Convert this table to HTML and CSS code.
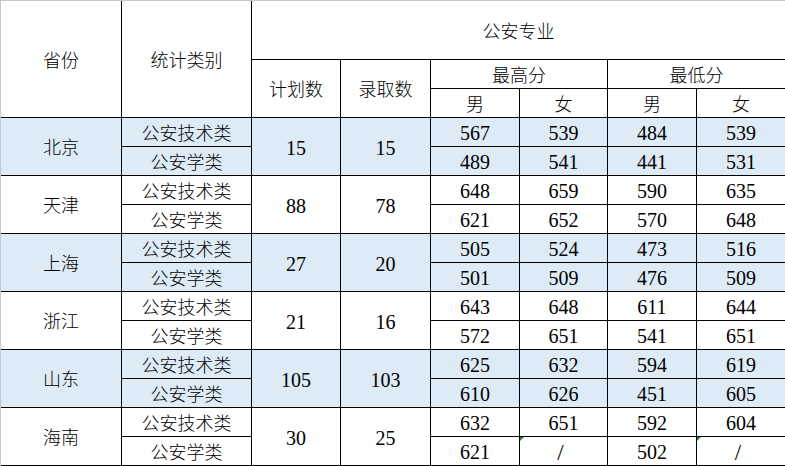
FILE: index.html
```html
<!DOCTYPE html>
<html lang="zh-CN">
<head>
<meta charset="utf-8">
<title>公安专业录取分数</title>
<link rel="stylesheet" href="styles.css">
</head>
<body>
<div class="sheet">
  <div class="c r3">省份</div>
  <div class="c r3">统计类别</div>
  <div class="c s6 top">公安专业</div>
  <div class="c r2">计划数</div>
  <div class="c r2">录取数</div>
  <div class="c s2">最高分</div>
  <div class="c s2">最低分</div>
  <div class="c">男</div>
  <div class="c">女</div>
  <div class="c">男</div>
  <div class="c">女</div>

  <div class="c r2 b">北京</div>
  <div class="c b">公安技术类</div>
  <div class="c r2 b n">15</div>
  <div class="c r2 b n">15</div>
  <div class="c b n">567</div>
  <div class="c b n">539</div>
  <div class="c b n">484</div>
  <div class="c b n">539</div>
  <div class="c b">公安学类</div>
  <div class="c b n">489</div>
  <div class="c b n">541</div>
  <div class="c b n">441</div>
  <div class="c b n">531</div>

  <div class="c r2">天津</div>
  <div class="c">公安技术类</div>
  <div class="c r2 n">88</div>
  <div class="c r2 n">78</div>
  <div class="c n">648</div>
  <div class="c n">659</div>
  <div class="c n">590</div>
  <div class="c n">635</div>
  <div class="c">公安学类</div>
  <div class="c n">621</div>
  <div class="c n">652</div>
  <div class="c n">570</div>
  <div class="c n">648</div>

  <div class="c r2 b">上海</div>
  <div class="c b">公安技术类</div>
  <div class="c r2 b n">27</div>
  <div class="c r2 b n">20</div>
  <div class="c b n">505</div>
  <div class="c b n">524</div>
  <div class="c b n">473</div>
  <div class="c b n">516</div>
  <div class="c b">公安学类</div>
  <div class="c b n">501</div>
  <div class="c b n">509</div>
  <div class="c b n">476</div>
  <div class="c b n">509</div>

  <div class="c r2">浙江</div>
  <div class="c">公安技术类</div>
  <div class="c r2 n">21</div>
  <div class="c r2 n">16</div>
  <div class="c n">643</div>
  <div class="c n">648</div>
  <div class="c n">611</div>
  <div class="c n">644</div>
  <div class="c">公安学类</div>
  <div class="c n">572</div>
  <div class="c n">651</div>
  <div class="c n">541</div>
  <div class="c n">651</div>

  <div class="c r2 b">山东</div>
  <div class="c b">公安技术类</div>
  <div class="c r2 b n">105</div>
  <div class="c r2 b n">103</div>
  <div class="c b n">625</div>
  <div class="c b n">632</div>
  <div class="c b n">594</div>
  <div class="c b n">619</div>
  <div class="c b">公安学类</div>
  <div class="c b n">610</div>
  <div class="c b n">626</div>
  <div class="c b n">451</div>
  <div class="c b n">605</div>

  <div class="c r2">海南</div>
  <div class="c">公安技术类</div>
  <div class="c r2 n">30</div>
  <div class="c r2 n">25</div>
  <div class="c n">632</div>
  <div class="c n">651</div>
  <div class="c n">592</div>
  <div class="c n">604</div>
  <div class="c">公安学类</div>
  <div class="c n">621</div>
  <div class="c n flag">/</div>
  <div class="c n">502</div>
  <div class="c n flag">/</div>
</div>
</body>
</html>
```

FILE: styles.css
```css
html, body {
  margin: 0;
  padding: 0;
  background: #ffffff;
  overflow: hidden;
}

.sheet {
  display: grid;
  grid-template-columns: 121px 130px 89px 90px 89px 88px 89px 89px;
  grid-template-rows: 59px repeat(14, 29px);
  width: max-content;
  border-top: 1px solid #c3c7d0;
  border-left: 1px solid #c3c7d0;
  font-family: "Liberation Serif", "Noto Sans CJK SC", serif;
  font-size: 18px;
  font-weight: 300;
  color: #000000;
}

.c {
  position: relative;
  box-sizing: border-box;
  display: flex;
  align-items: center;
  justify-content: center;
  border-right: 1px solid #000000;
  border-bottom: 1px solid #000000;
  padding-top: 3px;
  line-height: 1;
  white-space: nowrap;
}

.n {
  font-size: 20px;
  font-weight: 400;
  padding-top: 2px;
}

.r2 { grid-row: span 2; }
.r3 { grid-row: span 3; }
.s2 { grid-column: span 2; }
.s6 { grid-column: span 6; }

.b { background: #ddebf7; }

.flag {
  font-size: 23px;
  padding-right: 6px;
}

.flag::before {
  content: "";
  position: absolute;
  left: 0;
  top: 0;
  width: 0;
  height: 0;
  border-top: 4px solid #1a8a2a;
  border-right: 4px solid transparent;
}
```
